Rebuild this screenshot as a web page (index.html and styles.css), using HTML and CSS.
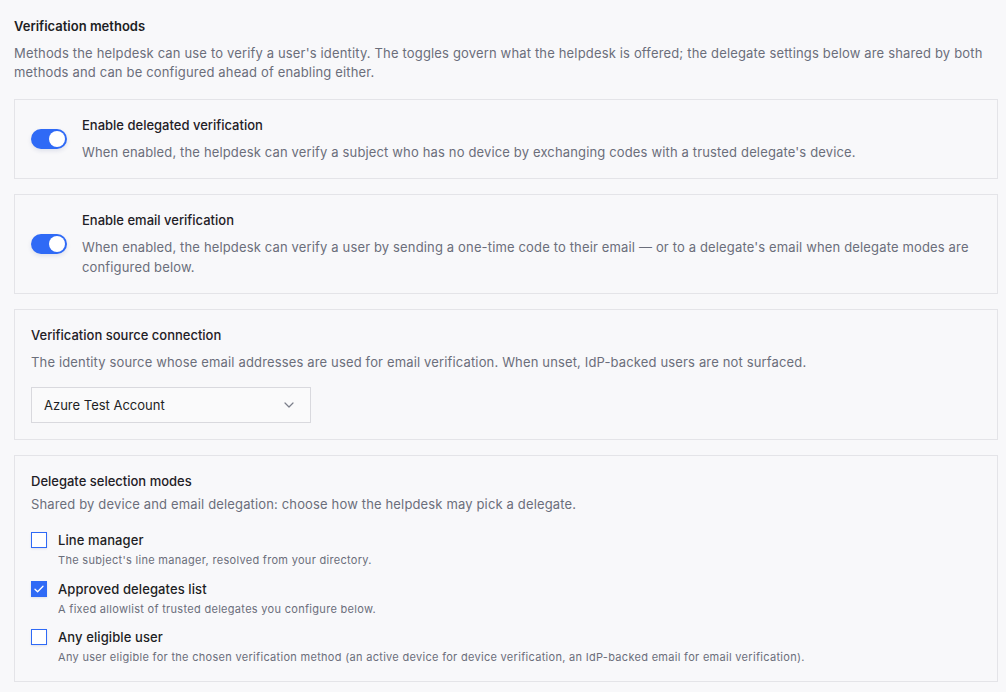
FILE: index.html
```html
<!DOCTYPE html>
<html>
<head>
<meta charset="utf-8">
<link rel="stylesheet" href="styles.css">
</head>
<body>
<div class="page">
  <h2 class="title">Verification methods</h2>
  <p class="lead">Methods the helpdesk can use to verify a user's identity. The toggles govern what the helpdesk is offered; the delegate settings below are shared by both methods and can be configured ahead of enabling either.</p>

  <div class="card toggle-card">
    <span class="toggle"><span class="knob"></span></span>
    <div class="text">
      <div class="card-title">Enable delegated verification</div>
      <div class="card-desc">When enabled, the helpdesk can verify a subject who has no device by exchanging codes with a trusted delegate's device.</div>
    </div>
  </div>

  <div class="card toggle-card">
    <span class="toggle"><span class="knob"></span></span>
    <div class="text">
      <div class="card-title">Enable email verification</div>
      <div class="card-desc">When enabled, the helpdesk can verify a user by sending a one-time code to their email — or to a delegate's email when delegate modes are configured below.</div>
    </div>
  </div>

  <div class="card block-card">
    <div class="card-title">Verification source connection</div>
    <div class="card-desc">The identity source whose email addresses are used for email verification. When unset, IdP-backed users are not surfaced.</div>
    <div class="select">
      <span>Azure Test Account</span>
      <svg class="chev" width="10" height="6" viewBox="0 0 10 6"><path d="M1 1l4 4 4-4" fill="none" stroke="#7b7e8a" stroke-width="1.2" stroke-linecap="round" stroke-linejoin="round"/></svg>
    </div>
  </div>

  <div class="card modes-card">
    <div class="card-title">Delegate selection modes</div>
    <div class="card-desc tight">Shared by device and email delegation: choose how the helpdesk may pick a delegate.</div>
    <div class="options">
      <div class="option">
        <span class="cb"></span>
        <div class="opt-text">
          <div class="opt-label">Line manager</div>
          <div class="opt-desc">The subject's line manager, resolved from your directory.</div>
        </div>
      </div>
      <div class="option">
        <span class="cb checked"><svg width="10" height="8" viewBox="0 0 10 8"><path d="M1 4.2l2.6 2.6L9 1.2" fill="none" stroke="#fff" stroke-width="1.3" stroke-linecap="round" stroke-linejoin="round"/></svg></span>
        <div class="opt-text">
          <div class="opt-label">Approved delegates list</div>
          <div class="opt-desc">A fixed allowlist of trusted delegates you configure below.</div>
        </div>
      </div>
      <div class="option">
        <span class="cb"></span>
        <div class="opt-text">
          <div class="opt-label">Any eligible user</div>
          <div class="opt-desc">Any user eligible for the chosen verification method (an active device for device verification, an IdP-backed email for email verification).</div>
        </div>
      </div>
    </div>
  </div>
</div>
</body>
</html>
```

FILE: styles.css
```css
* { box-sizing: border-box; }
html, body {
  margin: 0;
  padding: 0;
  background: #f8f8fa;
}
body {
  font-family: Inter, "Noto Sans", sans-serif;
  color: #1d1e24;
  -webkit-font-smoothing: antialiased;
}
.page {
  padding: 16px 8px 0 14px;
  display: flex;
  flex-direction: column;
}
.title {
  margin: 0;
  font-size: 13px;
  font-weight: 600;
  line-height: 20px;
}
.lead {
  margin: 8px 0 0;
  font-size: 13px;
  line-height: 19px;
  letter-spacing: 0.16px;
  color: #6b6e7b;
  padding-right: 4px;
}
.card {
  border: 1px solid #e4e4e8;
  background: #f8f8fa;
  margin-top: 15px;
}
.lead + .card { margin-top: 17px; }
.toggle-card {
  display: flex;
  align-items: center;
  padding: 16px;
  gap: 15px;
}
.toggle {
  flex: none;
  width: 36px;
  height: 20px;
  border-radius: 10px;
  background: #2f6af6;
  position: relative;
  box-shadow: 0 2px 4px rgba(40, 60, 120, 0.12);
}
.knob {
  position: absolute;
  top: 2px;
  right: 2px;
  width: 16px;
  height: 16px;
  border-radius: 50%;
  background: #fff;
}
.text {
  display: flex;
  flex-direction: column;
  gap: 8px;
}
.card-title {
  font-size: 13px;
  font-weight: 500;
  line-height: 18px;
  color: #1f2026;
}
.card-desc {
  font-size: 13px;
  line-height: 20px;
  letter-spacing: 0.15px;
  color: #6b6e7b;
}
.block-card {
  padding: 16px;
  display: flex;
  flex-direction: column;
}
.block-card .card-desc { margin-top: 8px; }
.select {
  margin-top: 15px;
  width: 280px;
  height: 36px;
  border: 1px solid #d9d9de;
  background: #fafafb;
  display: flex;
  align-items: center;
  justify-content: space-between;
  padding: 0 16px 0 12px;
  font-size: 13px;
  color: #1d1e24;
}
.modes-card {
  padding: 16px;
  display: flex;
  flex-direction: column;
}
.card-desc.tight { margin-top: 4px; }
.options {
  margin-top: 17px;
  display: flex;
  flex-direction: column;
  gap: 11.5px;
}
.option {
  display: flex;
  gap: 11px;
}
.cb {
  flex: none;
  width: 16px;
  height: 16px;
  margin-top: 1px;
  border: 1.5px solid #2f6af6;
  background: #fff;
  display: flex;
  align-items: center;
  justify-content: center;
  box-shadow: 0 1px 2px rgba(40, 60, 120, 0.12);
}
.cb.checked { background: #2f6af6; }
.opt-text {
  display: flex;
  flex-direction: column;
  gap: 3px;
}
.opt-label {
  font-size: 13px;
  font-weight: 500;
  line-height: 18px;
  letter-spacing: 0.1px;
}
.opt-desc {
  font-size: 11px;
  line-height: 16px;
  letter-spacing: 0.3px;
  color: #6b6e7b;
}
```
